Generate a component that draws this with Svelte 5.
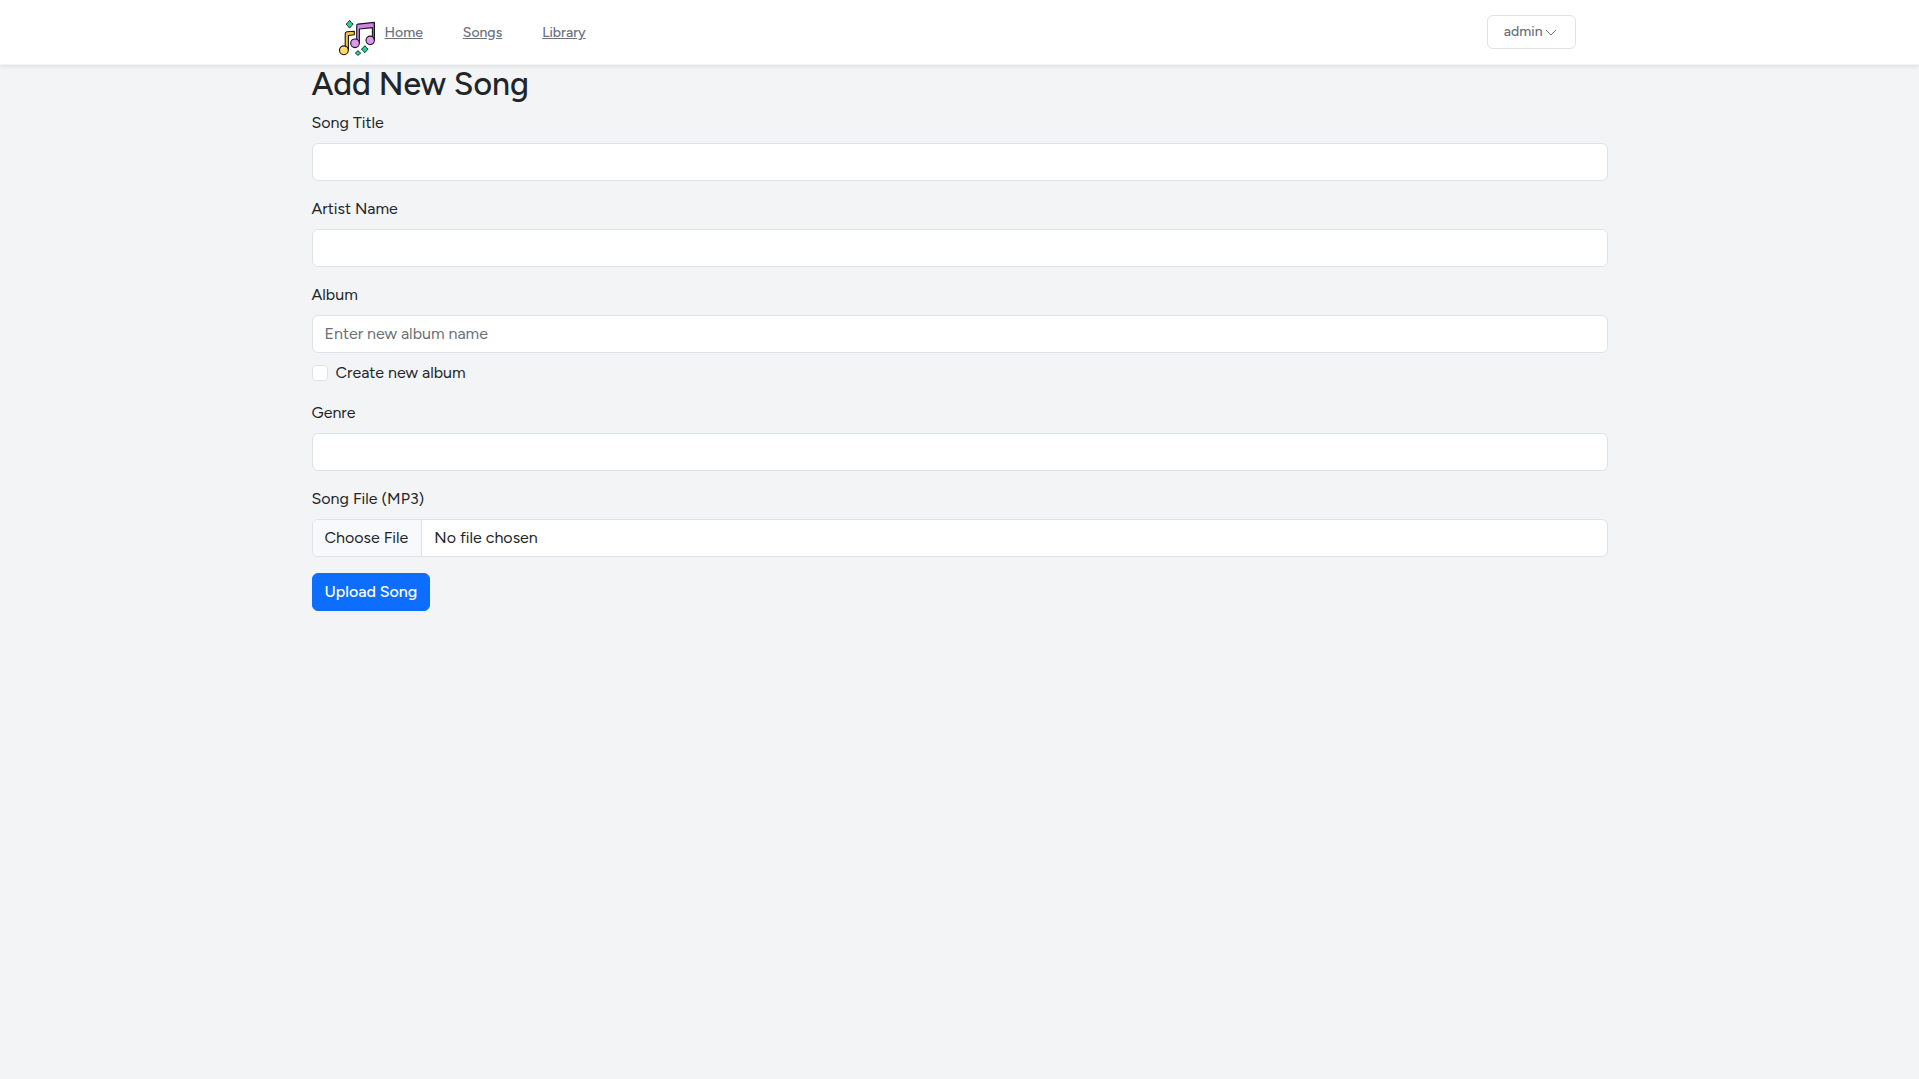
<script>
  let title = $state('');
  let artist = $state('');
  let album = $state('');
  let createAlbum = $state(false);
  let genre = $state('');

  const links = ['Home', 'Songs', 'Library'];
</script>

<div class="page">
  <nav class="navbar">
    <div class="navbar-inner">
      <a class="logo" href="/" aria-label="Music home">
        <svg viewBox="0 0 36 36" width="36" height="36" aria-hidden="true">
          <g stroke="#15151c" stroke-width="1.1" stroke-linejoin="round">
            <path fill="#f6c445" d="M6.2 13.6 Q6.3 12 8 11.7 L15.3 11.2 V14.7 L9.4 15.5 V30 H6.2 Z" />
            <circle cx="4.9" cy="30.3" r="4.4" fill="#ffdc68" />
            <path fill="#cf86e2" d="M17.7 22.5 V5.4 Q17.8 4.3 19 4.1 L35.4 2.4 V20 H33.4 V7.6 L20.4 9 V23 Z" />
            <circle cx="16" cy="23.3" r="4.3" fill="#dc98ec" />
            <circle cx="31.2" cy="20.3" r="4.2" fill="#dc98ec" />
          </g>
          <path d="M35.4 3 V20" stroke="#15151c" stroke-width="1.2" />
          <g fill="#2fd193" stroke="#12332d" stroke-width="1" stroke-linejoin="round">
            <path d="M10.6 0.3 L12.4 2.6 L14.2 4.2 L12.4 5.8 L10.6 8.1 L8.8 5.8 L7 4.2 L8.8 2.6 Z" />
            <path d="M25.8 25.7 L27.5 27.8 L29.2 29.2 L27.5 30.6 L25.8 32.7 L24.1 30.6 L22.4 29.2 L24.1 27.8 Z" />
            <path d="M19 30.5 L20.3 32.1 L21.7 33.1 L20.3 34.1 L19 35.5 L17.7 34.1 L16.3 33.1 L17.7 32.1 Z" />
          </g>
        </svg>
      </a>
      <div class="links">
        {#each links as link}
          <a href="/{link.toLowerCase()}">{link}</a>
        {/each}
      </div>
      <button class="user" type="button" aria-haspopup="menu">
        <span>admin</span>
        <svg viewBox="0 0 16 16" width="16" height="16" aria-hidden="true">
          <path d="M3 6 L8 11 L13 6" fill="none" stroke="currentColor" stroke-width="1" />
        </svg>
      </button>
    </div>
  </nav>

  <main class="container">
    <h1>Add New Song</h1>
    <form onsubmit={(e) => e.preventDefault()}>
      <div class="field">
        <label for="title">Song Title</label>
        <input class="control" id="title" type="text" bind:value={title} />
      </div>
      <div class="field">
        <label for="artist">Artist Name</label>
        <input class="control" id="artist" type="text" bind:value={artist} />
      </div>
      <div class="field">
        <label for="album">Album</label>
        <input class="control" id="album" type="text" placeholder="Enter new album name" bind:value={album} />
        <div class="check">
          <input id="create-album" type="checkbox" bind:checked={createAlbum} />
          <label for="create-album">Create new album</label>
        </div>
      </div>
      <div class="field">
        <label for="genre">Genre</label>
        <input class="control" id="genre" type="text" bind:value={genre} />
      </div>
      <div class="field">
        <label for="file">Song File (MP3)</label>
        <input class="control file" id="file" type="file" />
      </div>
      <button class="submit" type="submit">Upload Song</button>
    </form>
  </main>
</div>

<style>
  :global(body) {
    margin: 0;
    background: #f3f4f6;
  }

  .page,
  .page * {
    box-sizing: border-box;
  }

  .page {
    min-height: 100vh;
    background: #f3f4f6;
    color: #212529;
    font-family: Figtree, Lato, 'Open Sans', sans-serif;
    font-size: 16px;
    line-height: 24px;
  }

  .navbar {
    background: #fff;
    border-bottom: 1px solid #f3f4f6;
    box-shadow: 0 2px 4px rgba(0, 0, 0, 0.08);
  }

  .navbar-inner {
    display: flex;
    align-items: center;
    max-width: 1280px;
    height: 64px;
    margin: 0 auto;
    padding: 0 24px 0 19px;
  }

  .logo {
    display: flex;
    margin-right: 10px;
    padding-top: 11px;
  }

  .links {
    display: flex;
    gap: 40px;
    flex: 1;
    padding-top: 2px;
  }

  .links a {
    color: #6b7280;
    font-size: 14px;
    font-weight: 500;
    line-height: 20px;
    text-decoration: underline;
  }

  .user {
    display: flex;
    align-items: center;
    padding: 6px 16px;
    border: 1px solid #dee2e6;
    border-radius: 6px;
    background: #fff;
    color: #6b7280;
    font-family: inherit;
    font-size: 14px;
    font-weight: 500;
    line-height: 20px;
  }

  .container {
    max-width: 1320px;
    margin: 0 auto;
    padding: 0 12px;
  }

  h1 {
    margin: 0 0 8px;
    font-size: 32px;
    font-weight: 500;
    line-height: 38px;
  }

  .field {
    margin-bottom: 16px;
  }

  .field > label {
    display: block;
    width: fit-content;
    margin-bottom: 8px;
  }

  .control {
    display: block;
    width: 100%;
    height: 38px;
    padding: 5px 12px 7px;
    border: 1px solid #dee2e6;
    border-radius: 6px;
    background: #fff;
    color: #212529;
    font-family: inherit;
    font-size: 16px;
    line-height: 24px;
  }

  .control::placeholder {
    color: #6b7075;
    opacity: 1;
  }

  .file {
    padding: 0;
    overflow: hidden;
    line-height: 36px;
  }

  .file::file-selector-button {
    height: 36px;
    margin: 0 12px 0 0;
    padding: 0 13px 0 12px;
    border: 0;
    border-right: 1px solid #dee2e6;
    background: #f8f9fa;
    color: #212529;
    font: inherit;
    line-height: 36px;
  }

  .check {
    display: flex;
    align-items: center;
    gap: 8px;
    margin-top: 8px;
  }

  .check input {
    appearance: none;
    width: 16px;
    height: 16px;
    margin: 0;
    border: 1px solid #dee2e6;
    border-radius: 4px;
    background: #fff;
  }

  .check input:checked {
    border-color: #0d6efd;
    background: #0d6efd;
  }

  .submit {
    display: block;
    padding: 6px 12px;
    border: 1px solid #0d6efd;
    border-radius: 6px;
    background: #0d6efd;
    color: #fff;
    font-family: inherit;
    font-size: 16px;
    font-weight: 500;
    line-height: 24px;
  }
</style>
